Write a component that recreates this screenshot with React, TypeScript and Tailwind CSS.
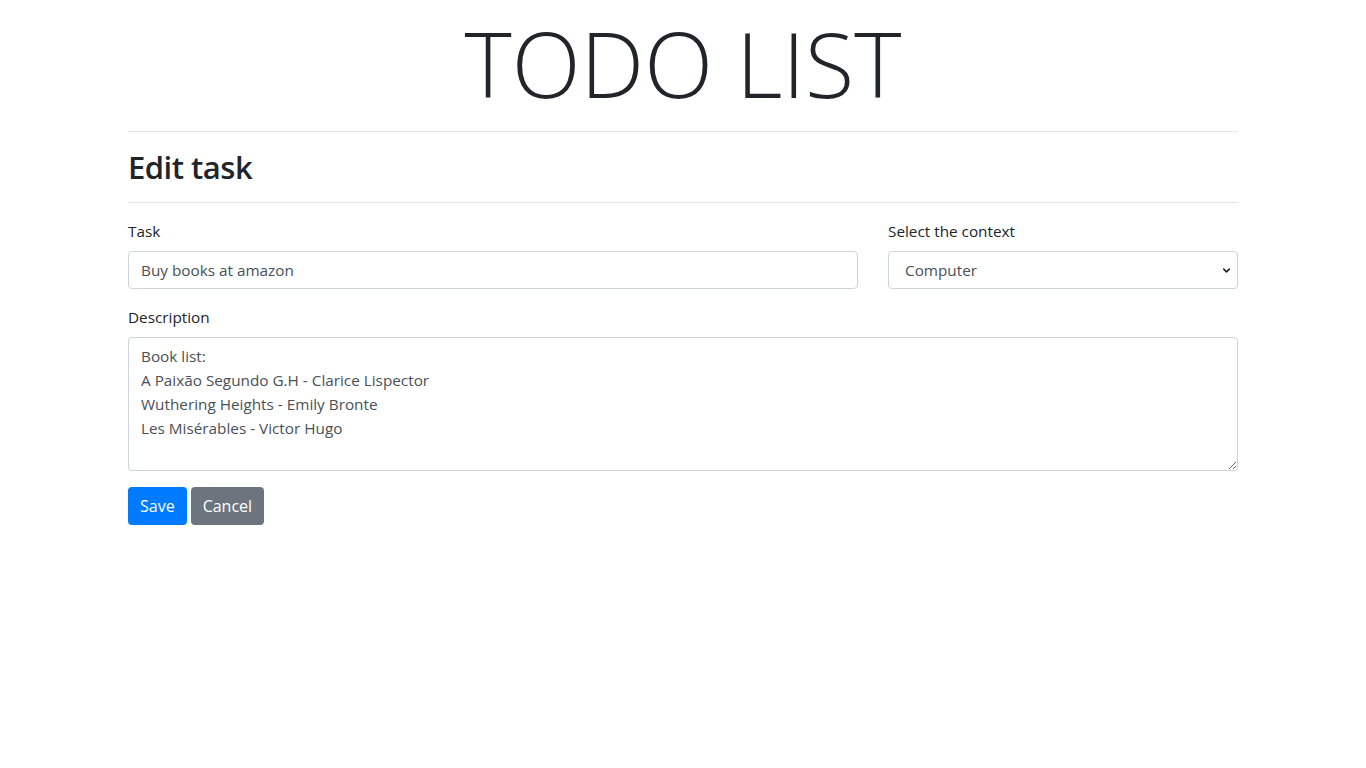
import { ChevronDown } from 'lucide-react'

const font = { fontFamily: '"Segoe UI", "Open Sans", "Noto Sans", sans-serif' }

export default function App() {
  return (
    <div className="min-h-screen bg-white text-[#212529] text-[15.3px] leading-[24px]" style={font}>
      <div className="mx-auto w-[1110px]">
        <h1 className="pt-[6px] text-center text-[90px] font-light leading-[115px]">TODO LIST</h1>
        <hr className="mt-[10px] mb-4 border-t border-black/10" />
        <h2 className="text-[31px] font-semibold leading-[38px] tracking-[-0.5px]">Edit task</h2>
        <hr className="mt-4 mb-4 border-t border-black/10" />

        <div className="flex gap-[30px]">
          <div className="w-[730px] mb-4">
            <label className="block mb-2">Task</label>
            <input
              className="block w-full h-[38px] px-3 border border-[#ced4da] rounded text-[#495057] outline-none"
              defaultValue="Buy books at amazon"
            />
          </div>
          <div className="w-[350px] mb-4">
            <label className="block mb-2">Select the context</label>
            <div className="relative">
              <select
                className="block w-full h-[38px] pl-4 pr-8 border border-[#ced4da] rounded text-[#495057] bg-white appearance-none outline-none"
                defaultValue="computer"
              >
                <option value="computer">Computer</option>
                <option value="home">Home</option>
                <option value="work">Work</option>
              </select>
              <ChevronDown
                className="absolute right-[6px] top-[14px] w-[11px] h-[11px] text-[#212529] pointer-events-none"
                strokeWidth={3.5}
              />
            </div>
          </div>
        </div>

        <div className="mb-4">
          <label className="block mb-2">Description</label>
          <textarea
            className="block w-full h-[134px] px-3 py-[6px] border border-[#ced4da] rounded text-[#495057] outline-none"
            rows={5}
            defaultValue={'Book list:\nA Paixão Segundo G.H - Clarice Lispector\nWuthering Heights - Emily Bronte\nLes Misérables - Victor Hugo'}
          />
        </div>

        <div className="flex gap-1">
          <button className="h-[38px] px-3 rounded bg-[#007bff] text-white text-[16px]">Save</button>
          <button className="h-[38px] px-3 rounded bg-[#6c757d] text-white text-[16px]">Cancel</button>
        </div>
      </div>
    </div>
  )
}
